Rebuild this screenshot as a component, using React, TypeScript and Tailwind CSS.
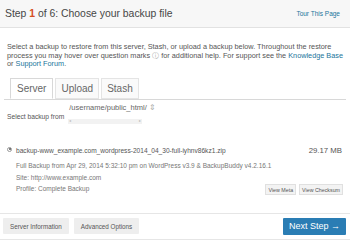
import React from 'react'

const font = { fontFamily: '"Liberation Sans", Arial, sans-serif' }

export default function App() {
  return (
    <div className="w-[350px] h-[250px] bg-white text-[#444] overflow-hidden" style={font}>
      {/* Header */}
      <div className="h-[28px] flex items-center justify-between px-[5px] bg-[#f7f7f7] border-b border-[#e2e2e2]">
        <h1 className="text-[10.4px] text-[#464646]">
          Step <span className="text-[#d54e21] font-bold">1</span> of 6: Choose your backup file
        </h1>
        <a className="text-[6.5px] text-[#21759b] mr-[5px]">Tour This Page</a>
      </div>

      {/* Intro */}
      <p className="px-[7px] mt-[15px] text-[7.3px] leading-[8.5px] text-[#555] whitespace-nowrap">
        Select a backup to restore from this server, Stash, or upload a backup below. Throughout the restore
        <br />
        process you may hover over question marks <span className="text-[#aaa]">ⓘ</span> for additional help. For support see the{' '}
        <a className="text-[#21759b]">Knowledge Base</a>
        <br />
        or <a className="text-[#21759b]">Support Forum</a>.
      </p>

      {/* Tabs */}
      <div className="mt-[9px] mx-[4px] flex gap-[2px] pl-[6px] border-b border-[#d8d8d8] text-[10px] text-[#666]">
        <div className="px-[6px] h-[21px] flex items-center bg-white border border-[#d8d8d8] border-b-white -mb-px">Server</div>
        <div className="px-[5px] h-[21px] flex items-center bg-[#fafafa] border border-[#e4e4e4]">Upload</div>
        <div className="px-[5px] h-[21px] flex items-center bg-[#fafafa] border border-[#e4e4e4]">Stash</div>
      </div>

      {/* Select backup from */}
      <div className="px-[7px] mt-[2px] flex items-end gap-[4px] text-[6.7px] text-[#555]">
        <span className="pb-[1px]">Select backup from</span>
        <div className="flex flex-col">
          <span className="text-[7.5px] text-[#666] ml-[1px]">/username/public_html/ <span className="text-[#aaa]">⇕</span></span>
          <div className="w-[74px] h-[5px] mt-[6px] mb-[-1px] flex items-center justify-between px-[1px] bg-[#f2f2f2] text-[#bbb] text-[4px]">
            <span>◂</span>
            <span>▸</span>
          </div>
        </div>
      </div>

      {/* Backup item */}
      <div className="mt-[22px] px-[7px] flex">
        <div className="w-[9px] pt-[2px]">
          <div className="w-[5px] h-[5px] rounded-full border border-[#999] flex items-center justify-center">
            <div className="w-[2px] h-[2px] rounded-full bg-[#555]" />
          </div>
        </div>
        <div className="flex-1">
          <div className="flex justify-between items-center text-[6.6px] text-[#555]">
            <span>backup-www_example.com_wordpress-2014_04_30-full-iyhnv86kz1.zip</span>
            <span className="mr-[1px] text-[7.8px]">29.17 MB</span>
          </div>
          <div className="mt-[4px] text-[6.5px] leading-[11.5px] text-[#777]">
            <div>Full Backup from Apr 29, 2014 5:32:10 pm on WordPress v3.9 &amp; BackupBuddy v4.2.16.1</div>
            <div>Site: http://www.example.com</div>
            <div className="flex items-center justify-between">
              <span>Profile: Complete Backup</span>
              <div className="flex gap-[3px] text-[5.3px] text-[#555]">
                <button className="px-[2px] h-[11px] bg-[#f3f3f3] border border-[#e0e0e0]">View Meta</button>
                <button className="px-[2px] h-[11px] bg-[#f3f3f3] border border-[#e0e0e0]">View Checksum</button>
              </div>
            </div>
          </div>
        </div>
      </div>

      {/* Footer */}
      <div className="mt-[18px] border-t border-b border-[#e6e6e6] h-[27px] px-[3px] flex items-center justify-between">
        <div className="flex gap-[5px] text-[6.3px] text-[#555]">
          <button className="px-[7px] h-[16px] bg-[#eeeeee] rounded-[1px]">Server Information</button>
          <button className="px-[7px] h-[16px] bg-[#eeeeee] rounded-[1px]">Advanced Options</button>
        </div>
        <button className="px-[6px] h-[17px] mr-[1px] bg-[#2a7db4] text-white text-[9px] rounded-[1px]">Next Step →</button>
      </div>
    </div>
  )
}
